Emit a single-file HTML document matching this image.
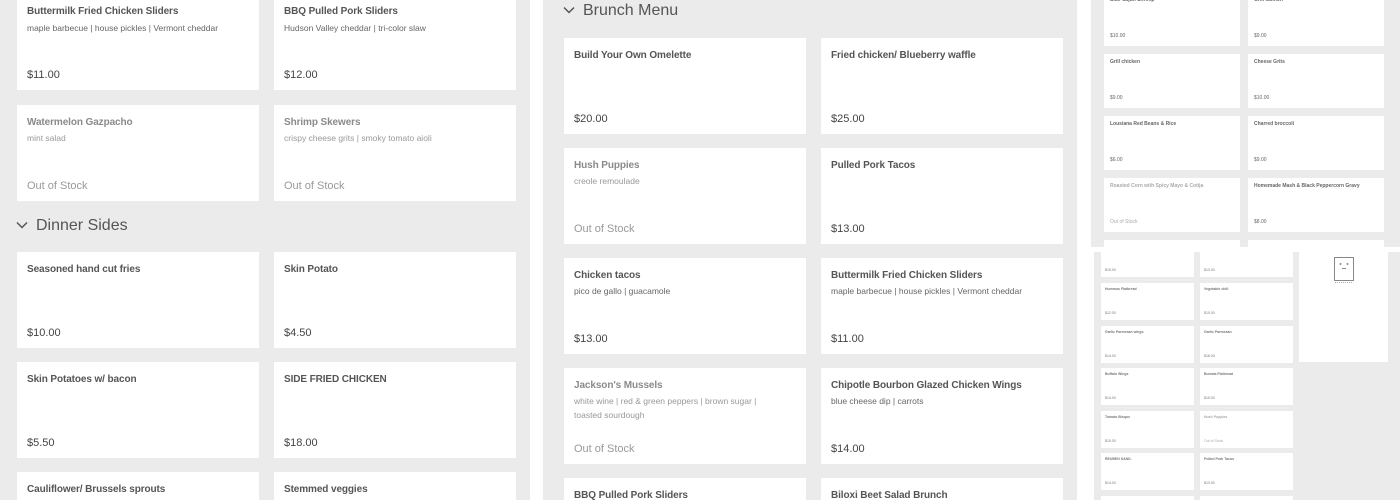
<!DOCTYPE html>
<html><head><meta charset="utf-8"><style>
*{margin:0;padding:0;box-sizing:border-box}
html,body{width:1400px;height:500px;overflow:hidden}
body{background:#fff;font-family:"Liberation Sans",sans-serif}
#w{position:relative;width:1400px;height:500px;overflow:hidden}
.g{position:absolute;background:#ebebeb}
.c{position:absolute;width:242px;height:96px;background:#fff;overflow:hidden}
.c .t{position:absolute;left:10px;top:12px;font-weight:bold;font-size:10px;color:#555;white-space:nowrap;letter-spacing:-0.1px}
.c .d{position:absolute;left:10px;top:26px;font-size:8.5px;color:#666;line-height:14px;width:195px}
.c .p{position:absolute;left:10px;top:75px;font-size:11px;color:#444}
.c.o .t{color:#8a8a8a}.c.o .d{color:#999}.c.o .p{color:#999}
.h{position:absolute;font-size:16px;color:#555}
.h svg{position:absolute;left:-20px;top:4px}
.s{position:absolute;background:#fff;width:136px;height:54px;overflow:hidden}
.s .t{position:absolute;left:6px;top:5px;font-weight:bold;font-size:5px;color:#666;white-space:nowrap}
.s .p{position:absolute;left:6px;bottom:7px;font-size:5px;color:#666}
.m{position:absolute;background:#fff;width:93px;height:37px;overflow:hidden}
.m .t{position:absolute;left:4px;top:4px;font-weight:bold;font-size:3.5px;color:#777;white-space:nowrap}
.m .p{position:absolute;left:4px;bottom:5px;font-size:3.5px;color:#777}
</style></head><body><div id="w">
<div class="g" style="left:0;top:0;width:530px;height:500px"></div>
<div class="g" style="left:543px;top:0;width:534px;height:500px"></div>
<div class="g" style="left:1091px;top:0;width:309px;height:247px"></div>
<div class="g" style="left:1094px;top:252px;width:306px;height:248px"></div>

<div class="c" style="left:17px;top:0;height:90px"><div class="t" style="top:6px">Buttermilk Fried Chicken Sliders</div><div class="d" style="top:21px">maple barbecue | house pickles | Vermont cheddar</div><div class="p" style="top:69px">$11.00</div></div>
<div class="c" style="left:274px;top:0;height:90px"><div class="t" style="top:6px">BBQ Pulled Pork Sliders</div><div class="d" style="top:21px">Hudson Valley cheddar | tri-color slaw</div><div class="p" style="top:69px">$12.00</div></div>
<div class="c o" style="left:17px;top:105px"><div class="t">Watermelon Gazpacho</div><div class="d">mint salad</div><div class="p">Out of Stock</div></div>
<div class="c o" style="left:274px;top:105px"><div class="t">Shrimp Skewers</div><div class="d">crispy cheese grits | smoky tomato aioli</div><div class="p">Out of Stock</div></div>
<div class="h" style="left:36px;top:217px"><svg width="12" height="8" viewBox="0 0 12 8"><path d="M1 1.5l5 5 5-5" fill="none" stroke="#555" stroke-width="1.5"/></svg>Dinner Sides</div>
<div class="c" style="left:17px;top:252px"><div class="t">Seasoned hand cut fries</div><div class="p">$10.00</div></div>
<div class="c" style="left:274px;top:252px"><div class="t">Skin Potato</div><div class="p">$4.50</div></div>
<div class="c" style="left:17px;top:362px"><div class="t">Skin Potatoes w/ bacon</div><div class="p">$5.50</div></div>
<div class="c" style="left:274px;top:362px"><div class="t">SIDE FRIED CHICKEN</div><div class="p">$18.00</div></div>
<div class="c" style="left:17px;top:472px;height:28px"><div class="t">Cauliflower/ Brussels sprouts</div></div>
<div class="c" style="left:274px;top:472px;height:28px"><div class="t">Stemmed veggies</div></div>

<div class="h" style="left:583px;top:2px"><svg width="12" height="8" viewBox="0 0 12 8"><path d="M1 1.5l5 5 5-5" fill="none" stroke="#555" stroke-width="1.5"/></svg>Brunch Menu</div>
<div class="c" style="left:564px;top:38px"><div class="t">Build Your Own Omelette</div><div class="p">$20.00</div></div>
<div class="c" style="left:821px;top:38px"><div class="t">Fried chicken/ Blueberry waffle</div><div class="p">$25.00</div></div>
<div class="c o" style="left:564px;top:148px"><div class="t">Hush Puppies</div><div class="d">creole remoulade</div><div class="p">Out of Stock</div></div>
<div class="c" style="left:821px;top:148px"><div class="t">Pulled Pork Tacos</div><div class="p">$13.00</div></div>
<div class="c" style="left:564px;top:258px"><div class="t">Chicken tacos</div><div class="d">pico de gallo | guacamole</div><div class="p">$13.00</div></div>
<div class="c" style="left:821px;top:258px"><div class="t">Buttermilk Fried Chicken Sliders</div><div class="d" style="width:225px">maple barbecue | house pickles | Vermont cheddar</div><div class="p">$11.00</div></div>
<div class="c o" style="left:564px;top:368px"><div class="t">Jackson's Mussels</div><div class="d">white wine | red &amp; green peppers | brown sugar | toasted sourdough</div><div class="p">Out of Stock</div></div>
<div class="c" style="left:821px;top:368px"><div class="t">Chipotle Bourbon Glazed Chicken Wings</div><div class="d">blue cheese dip | carrots</div><div class="p">$14.00</div></div>
<div class="c" style="left:564px;top:478px;height:22px"><div class="t">BBQ Pulled Pork Sliders</div></div>
<div class="c" style="left:821px;top:478px;height:22px"><div class="t">Biloxi Beet Salad Brunch</div></div>

<div class="s" style="left:1104px;top:0;height:46px"><div class="t" style="top:-3px">Side Cajun Shrimp</div><div class="p">$10.00</div></div>
<div class="s" style="left:1248px;top:0;height:46px"><div class="t" style="top:-3px">Grill salmon</div><div class="p">$9.00</div></div>
<div class="s" style="left:1104px;top:54px"><div class="t">Grill chicken</div><div class="p">$9.00</div></div>
<div class="s" style="left:1248px;top:54px"><div class="t">Cheese Grits</div><div class="p">$10.00</div></div>
<div class="s" style="left:1104px;top:116px"><div class="t">Lousiana Red Beans &amp; Rice</div><div class="p">$6.00</div></div>
<div class="s" style="left:1248px;top:116px"><div class="t">Charred broccoli</div><div class="p">$9.00</div></div>
<div class="s" style="left:1104px;top:178px"><div class="t" style="color:#aaa">Roasted Corn with Spicy Mayo &amp; Cotija</div><div class="p" style="color:#aaa">Out of Stock</div></div>
<div class="s" style="left:1248px;top:178px"><div class="t">Homemade Mash &amp; Black Peppercorn Gravy</div><div class="p">$8.00</div></div>
<div class="s" style="left:1104px;top:240px;height:7px"></div>
<div class="s" style="left:1248px;top:240px;height:7px"></div>

<div class="m" style="left:1101px;top:252px;height:25px"><div class="p">$10.00</div></div>
<div class="m" style="left:1200px;top:252px;height:25px"><div class="p">$13.00</div></div>
<div class="m" style="left:1101px;top:283px"><div class="t">Hummus Flatbread</div><div class="p">$12.00</div></div>
<div class="m" style="left:1200px;top:283px"><div class="t">Vegetable chili</div><div class="p">$10.00</div></div>
<div class="m" style="left:1101px;top:326px"><div class="t">Garlic Parmesan wings</div><div class="p">$14.00</div></div>
<div class="m" style="left:1200px;top:326px"><div class="t">Garlic Parmesan</div><div class="p">$16.00</div></div>
<div class="m" style="left:1101px;top:368px"><div class="t">Buffalo Wings</div><div class="p">$14.00</div></div>
<div class="m" style="left:1200px;top:368px"><div class="t">Burrata Flatbread</div><div class="p">$15.00</div></div>
<div class="m" style="left:1101px;top:411px"><div class="t">Tomato Bisque</div><div class="p">$10.00</div></div>
<div class="m" style="left:1200px;top:411px"><div class="t" style="color:#aaa">Hush Puppies</div><div class="p" style="color:#aaa">Out of Stock</div></div>
<div class="m" style="left:1101px;top:453px"><div class="t">REUBEN SAND.</div><div class="p">$14.00</div></div>
<div class="m" style="left:1200px;top:453px"><div class="t">Pulled Pork Tacos</div><div class="p">$13.00</div></div>
<div class="m" style="left:1101px;top:496px;height:4px"></div>
<div class="m" style="left:1200px;top:496px;height:4px"></div>
<div style="position:absolute;left:1299px;top:252px;width:89px;height:110px;background:#fff"></div>
<svg style="position:absolute;left:1333px;top:256px" width="22" height="28" viewBox="0 0 22 28"><path d="M1.5 1.5h19v23h-19z" fill="#fff" stroke="#888" stroke-width="1"/><circle cx="7.5" cy="8" r="1" fill="#888"/><circle cx="14.5" cy="8" r="1" fill="#888"/><path d="M9 12.5h4" stroke="#888"/><path d="M2 26.5h18" stroke="#aaa" stroke-dasharray="1 1"/></svg>
</div></body></html>
